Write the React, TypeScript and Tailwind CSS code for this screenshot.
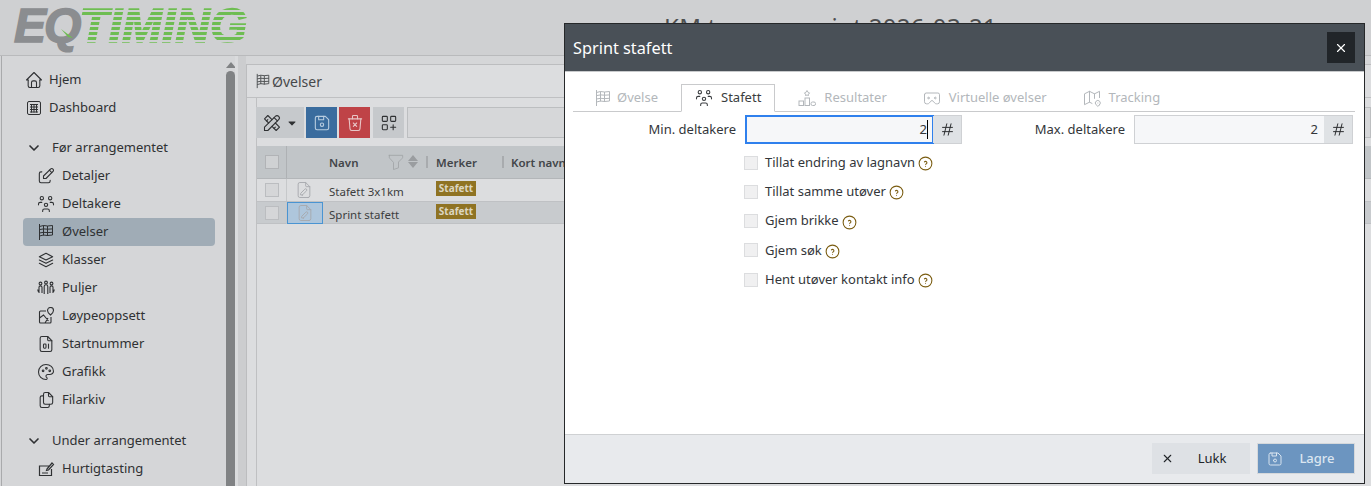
import type { ReactNode } from "react";
import {
  TbCardboards,
  TbCaretDownFilled,
  TbChevronDown,
  TbDeviceFloppy,
  TbEdit,
  TbFileDigit,
  TbFilePencil,
  TbFiles,
  TbFilter,
  TbHash,
  TbHelpCircle,
  TbHome,
  TbLayoutGridAdd,
  TbMap2,
  TbPalette,
  TbStack2,
  TbTools,
  TbTrashX,
  TbUsersGroup,
  TbX,
} from "react-icons/tb";

const font = "font-['Noto_Sans','Open_Sans',sans-serif]";

function FlagIcon({ className = "" }: { className?: string }) {
  return (
    <svg viewBox="0 0 18 18" fill="none" stroke="currentColor" strokeWidth="1" className={className}>
      <path d="M2.5 1v16M2.5 3.5l4-1 4 .5 5-.5v9.5l-5 .5-4-.5-4 1M2.5 6.6l4-.7 4 .3 5-.3M2.5 10l4-.7 4 .3 5-.3M6.5 2.5v10M10.5 3v10" />
    </svg>
  );
}

function GridIcon({ className = "" }: { className?: string }) {
  return (
    <svg viewBox="0 0 18 18" fill="none" stroke="currentColor" strokeWidth="1" className={className}>
      <rect x="2.5" y="2.5" width="13" height="13" rx="1.5" />
      <path d="M5 5.5h8M5 8h8M5 10.5h8M5 13h8M6.5 5v8.5M9 5v8.5M11.5 5v8.5" />
    </svg>
  );
}

function QuickEntryIcon({ className = "" }: { className?: string }) {
  return (
    <svg viewBox="0 0 18 18" fill="none" stroke="currentColor" strokeWidth="1.2" className={className}>
      <path d="M12 6H2.5v9.5h12V9M5 13h6M10 9l5-6 1.5 1.5-5 5.5-2 .5z" />
    </svg>
  );
}

function PodiumIcon({ className = "" }: { className?: string }) {
  return (
    <svg viewBox="0 0 18 18" fill="none" stroke="currentColor" strokeWidth="1" className={className}>
      <path d="M9 1.5l1.2 2 1.3.4-1 1.4v1.2L9 6l-1.5.5V5.3l-1-1.4 1.3-.4z" />
      <rect x="1" y="12" width="4.5" height="4.5" />
      <rect x="7" y="9" width="4.5" height="7.5" />
      <rect x="13" y="13" width="4.5" height="3.5" rx="1.5" />
    </svg>
  );
}

function PoolsIcon({ className = "" }: { className?: string }) {
  return (
    <svg viewBox="0 0 18 18" fill="none" stroke="currentColor" strokeWidth="1.1" className={className}>
      <circle cx="3.5" cy="4.5" r="1.4" />
      <circle cx="9" cy="3.5" r="1.4" />
      <circle cx="14.5" cy="4.5" r="1.4" />
      <path d="M2 14V8.500a1.500 1.500 0 0 1 3-.2v5.700M7.200 15V7.500a1.800 1.800 0 0 1 3.600 0V15M13 14V8.300a1.500 1.500 0 0 1 3 .2V14M1 10.500c-.3 1 .2 2 1 2.500M17 10.500c.3 1-.2 2-1 2.500" />
    </svg>
  );
}

function CourseIcon({ className = "" }: { className?: string }) {
  return (
    <svg viewBox="0 0 18 18" fill="none" stroke="currentColor" strokeWidth="1.1" className={className}>
      <path d="M9 4H3.500a1 1 0 0 0-1 1v10a1 1 0 0 0 1 1h9.500a1 1 0 0 0 1-1v-5M2.500 11l4-3 5 6M8 16l3-5" />
      <path d="M13.500 8s-3-2.500-3-4.500a3 3 0 0 1 6 0C16.500 5.500 13.500 8 13.500 8z" />
    </svg>
  );
}

type NavEntry = { label: string; icon: ReactNode; active?: boolean };

const iconClass = "w-[18px] h-[18px] shrink-0";
const tablerClass = "w-5 h-5 -mx-px shrink-0";

const beforeItems: NavEntry[] = [
  { label: "Detaljer", icon: <TbEdit className={tablerClass} strokeWidth={1.3} /> },
  { label: "Deltakere", icon: <TbUsersGroup className={tablerClass} strokeWidth={1.3} /> },
  { label: "Øvelser", icon: <FlagIcon className={iconClass} />, active: true },
  { label: "Klasser", icon: <TbStack2 className={tablerClass} strokeWidth={1.3} /> },
  { label: "Puljer", icon: <PoolsIcon className={iconClass} /> },
  { label: "Løypeoppsett", icon: <CourseIcon className={iconClass} /> },
  { label: "Startnummer", icon: <TbFileDigit className={tablerClass} strokeWidth={1.3} /> },
  { label: "Grafikk", icon: <TbPalette className={tablerClass} strokeWidth={1.3} /> },
  { label: "Filarkiv", icon: <TbFiles className={tablerClass} strokeWidth={1.3} /> },
];

function NavItem({ label, icon, active }: NavEntry) {
  return (
    <div className={`h-7 flex items-center gap-[7px] pl-[14px] ml-[21px] w-[192px] rounded ${active ? "bg-[#a0acb6]" : ""}`}>
      <span className="w-[18px] flex justify-center">{icon}</span>
      {label}
    </div>
  );
}

function Sidebar() {
  return (
    <aside className="w-[221px] shrink-0 pt-[10px] text-[13px] text-[#2f3133]">
      <div className="h-7 flex items-center gap-[6px] pl-[23px]">
        <TbHome className={tablerClass} strokeWidth={1.3} />
        Hjem
      </div>
      <div className="h-7 flex items-center gap-[6px] pl-[23px]">
        <GridIcon className={iconClass} />
        Dashboard
      </div>
      <div className="h-7 mt-3 flex items-center gap-[10px] pl-[24px]">
        <TbChevronDown className="w-4 h-4" strokeWidth={2.5} />
        Før arrangementet
      </div>
      {beforeItems.map((item) => (
        <NavItem key={item.label} {...item} />
      ))}
      <div className="h-7 mt-[13px] flex items-center gap-[10px] pl-[24px]">
        <TbChevronDown className="w-4 h-4" strokeWidth={2.5} />
        Under arrangementet
      </div>
      <NavItem label="Hurtigtasting" icon={<QuickEntryIcon className={iconClass} />} />
    </aside>
  );
}

function Scrollbar() {
  return (
    <div className="w-[12px] shrink-0 pl-[3px] flex flex-col items-center pt-[6px] gap-[3px]">
      <div className="w-0 h-0 border-x-[5px] border-x-transparent border-b-[6px] border-b-[#808284]" />
      <div className="w-[9px] flex-1 rounded-t-full bg-[#808284]" />
    </div>
  );
}

function Badge() {
  return (
    <span className="inline-flex items-center justify-center w-10 h-[15px] bg-[#8f7323] text-[#dcd6c0] text-[10px] font-bold">
      Stafett
    </span>
  );
}

function Row({ name, selected }: { name: string; selected?: boolean }) {
  return (
    <div
      className={`grid grid-cols-[30px_36px_113px_auto] items-center border-b border-[#bfc1c4] ${
        selected ? "h-[22px] bg-[#c8cbce]" : "h-[23px]"
      }`}
    >
      <span className="flex justify-center h-full items-center border-r border-[#c6c8ca]">
        <span className="w-[14px] h-[14px] border border-[#bbbdc0] bg-[#d5d6d8]" />
      </span>
      <span
        className={`h-full flex items-center pl-[7px] ${
          selected ? "bg-[#aec6dc] border border-[#4a94d2]" : ""
        }`}
      >
        <TbFilePencil className="w-5 h-5 text-[#a6a9ad]" strokeWidth={1.1} />
      </span>
      <span className="pl-[6px] mt-1 text-[11.5px] text-[#3c3e40]">{name}</span>
      <span className="-mt-[3px] flex">
        <Badge />
      </span>
    </div>
  );
}

function BackgroundPanel() {
  return (
    <section className="mt-2 flex-1 border border-[#bcbdbf] border-r-0 border-b-0 bg-[#dcdddf] text-[13px] text-[#46484a]">
      <div className="h-[33px] flex items-center pl-2 gap-px border-b border-[#bfc0c2] text-[14px]">
        <FlagIcon className="w-4 h-4" />
        Øvelser
      </div>
      <div className="ml-[9px] h-[388px] border-l border-[#bfc0c2]">
        <div className="flex gap-[2px] pt-[9px] pb-2 -ml-px">
          <div className="w-12 h-[31px] bg-[#c6c9cc] flex items-center justify-center gap-1 text-[#2f3133]">
            <TbTools className="w-5 h-5" strokeWidth={1.3} />
            <TbCaretDownFilled className="w-3 h-3" />
          </div>
          <div className="w-[31px] h-[31px] bg-[#3a6c9e] flex items-center justify-center text-[#b9cde0]">
            <TbDeviceFloppy className="w-5 h-5" strokeWidth={1.3} />
          </div>
          <div className="w-[31px] h-[31px] bg-[#bf4347] flex items-center justify-center text-[#e8c5c6]">
            <TbTrashX className="w-5 h-5" strokeWidth={1.3} />
          </div>
          <div className="w-[31px] h-[31px] ml-[1px] bg-[#c6c9cc] flex items-center justify-center text-[#2f3133]">
            <TbLayoutGridAdd className="w-5 h-5" strokeWidth={1.3} />
          </div>
          <div className="flex-1 h-[31px] ml-[1px] border border-[#bcbec0] bg-[#d6d7d9]" />
        </div>
        <div className="h-[33px] bg-[#c1c5c8] border-b border-[#b3b6b9] grid grid-cols-[30px_36px_113px_75px_auto] items-center font-semibold text-[#43464a] text-[11.5px]">
          <span className="flex justify-center h-full items-center border-r border-[#aeb1b4]">
            <span className="w-[14px] h-[14px] border border-[#b1b3b6] bg-[#cfd1d3]" />
          </span>
          <span />
          <span className="relative pl-[6px] mt-px">
            Navn
            <TbFilter className="absolute left-[63px] -top-[2px] w-5 h-5 text-[#a0a3a6]" strokeWidth={1} />
            <span className="absolute left-[85px] top-[1px] flex flex-col gap-[1px]">
              <span className="w-0 h-0 border-x-[5px] border-x-transparent border-b-[6px] border-b-[#9a9da0]" />
              <span className="w-0 h-0 border-x-[5px] border-x-transparent border-t-[6px] border-t-[#9a9da0]" />
            </span>
            <span className="absolute right-[8px] top-[2px] h-3 border-l-2 border-[#a8abae]" />
          </span>
          <span className="relative mt-px">
            Merker
            <span className="absolute right-[7px] top-[2px] h-3 border-l-2 border-[#a8abae]" />
          </span>
          <span className="mt-px whitespace-nowrap">Kort navn</span>
        </div>
        <Row name="Stafett 3x1km" />
        <Row name="Sprint stafett" selected />
      </div>
    </section>
  );
}

function TabButton({ label, icon, active }: { label: string; icon: ReactNode; active?: boolean }) {
  return (
    <div
      className={`flex items-center gap-2 ${
        active
          ? "h-[28px] mx-[2px] px-[13px] border border-[#c9cacc] border-b-white bg-white text-[#3a3d40] -mb-px"
          : "h-[27px] px-[15px] text-[#b3b7bb]"
      }`}
    >
      {icon}
      {label}
    </div>
  );
}

function NumberField({ label, value, focused }: { label: string; value: string; focused?: boolean }) {
  return (
    <div className="flex items-center">
      <span className="text-right w-[172px] pr-[9px] text-[#33363a]">{label}</span>
      <div className="flex h-[29px] border border-[#cfd1d4] flex-1">
        <div
          className={`flex-1 bg-[#f6f7f9] flex items-center justify-end ${
            focused ? "border-2 border-[#2f80ed] -m-px pr-[4px]" : "pr-[6px]"
          }`}
        >
          <span>{value}</span>
          {focused && <span className="w-px h-[19px] bg-black" />}
        </div>
        <span className="w-[28px] bg-[#dfe2e5] flex items-center justify-center">
          <TbHash className="w-[17px] h-[17px] text-[#2c2e30]" strokeWidth={1.4} />
        </span>
      </div>
    </div>
  );
}

const options = [
  "Tillat endring av lagnavn",
  "Tillat samme utøver",
  "Gjem brikke",
  "Gjem søk",
  "Hent utøver kontakt info",
];

function Modal() {
  return (
    <div className="absolute left-[564px] top-[23px] w-[801px] h-[461px] border border-[#26282a] bg-white flex flex-col text-[13px] text-[#33363a]">
      <header className="h-[48px] shrink-0 bg-[#495057] border-b border-[#c8cacc] flex items-center justify-between pl-2 pr-[9px] text-white">
        <span className="text-[16.300px] pt-px">Sprint stafett</span>
        <span className="w-7 h-[31px] bg-[#212529] flex items-center justify-center">
          <TbX className="w-[14px] h-[14px]" strokeWidth={2} />
        </span>
      </header>
      <div className="flex-1 px-2">
        <div className="mt-[13px] h-[27px] pl-[3px] flex items-end gap-[6px] border-b border-[#c9cacc] w-[782px]">
          <TabButton label="Øvelse" icon={<FlagIcon className={`${iconClass} translate-x-[3px]`} />} />
          <TabButton active label="Stafett" icon={<TbUsersGroup className={tablerClass} strokeWidth={1.3} />} />
          <TabButton label="Resultater" icon={<PodiumIcon className={iconClass} />} />
          <TabButton label="Virtuelle øvelser" icon={<TbCardboards className={tablerClass} strokeWidth={1.2} />} />
          <TabButton label="Tracking" icon={<TbMap2 className={tablerClass} strokeWidth={1.2} />} />
        </div>
        <div className="mt-[3px] grid grid-cols-[389px_391px] w-[780px]">
          <NumberField label="Min. deltakere" value="2" focused />
          <NumberField label="Max. deltakere" value="2" />
        </div>
        <div className="mt-[4px] pl-[171px]">
          {options.map((option) => (
            <label key={option} className="h-[29.25px] flex items-center">
              <span className="w-[14px] h-[14px] mr-[7px] bg-[#f0f0f1] border border-[#dcdddf]" />
              {option}
              <TbHelpCircle className="ml-[2px] mt-[2px] w-[17px] h-[17px] text-[#7a5c10]" strokeWidth={1.5} />
            </label>
          ))}
        </div>
      </div>
      <footer className="h-[49px] shrink-0 border-t border-[#cfd1d3] bg-[#e8eaed] flex justify-end gap-[7px] pt-2 pr-[9px]">
        <div className="w-[98px] h-[31px] bg-[#dee1e5] flex items-center px-[9px] text-[#212529]">
          <TbX className="w-[13px] h-[13px]" strokeWidth={2} />
          <span className="flex-1 text-center pl-[9px]">Lukk</span>
        </div>
        <div className="w-[98px] h-[31px] bg-[#6c95c0] border border-[#d5d8db] flex items-center px-2 text-[#dbe6f0]">
          <TbDeviceFloppy className="w-[18px] h-[18px]" strokeWidth={1.3} />
          <span className="flex-1 text-center pl-[4px] font-medium">Lagre</span>
        </div>
      </footer>
    </div>
  );
}

function Logo() {
  return (
    <div className="relative w-[240px] flex items-center pl-[14px] font-['Liberation_Sans',sans-serif] font-bold italic text-[48px] leading-none">
      <span className="text-[#8b8d90] tracking-[-2px] [-webkit-text-stroke:1.5px_#8b8d90]">EQ</span>
      <span className="bg-[repeating-linear-gradient(180deg,#6ebd52_0,#6ebd52_3.500px,#cfd0d2_3.500px,#cfd0d2_5px)] bg-clip-text text-transparent tracking-[0px] [-webkit-text-stroke:1.5px_transparent]">
        TIMING
      </span>
      <svg viewBox="0 0 20 14" className="absolute left-[60px] top-[26px] w-5 h-[14px]">
        <path d="M1 1l12 9-5-1z" fill="#6ebd52" />
      </svg>
    </div>
  );
}

export default function App() {
  return (
    <div className={`relative w-[1371px] h-[486px] overflow-hidden bg-[#d5d6d8] ${font}`}>
      <header className="h-[56px] bg-[#cfd0d2] border-b border-[#b9babc] flex items-start overflow-hidden">
        <div className="pt-[2px]">
          <Logo />
        </div>
        <div className="ml-[424px] pt-[9px] text-[24px] tracking-[0.3px] text-[#4e4f50] whitespace-nowrap">
          KM terrengsprint 2026-03-21
        </div>
      </header>
      <div className="flex h-[430px] pl-px">
        <div className="border-l border-[#a9aaac]" />
        <Sidebar />
        <Scrollbar />
        <div className="w-[3px] bg-[#dadbdd]" />
        <div className="w-[8px] bg-[#cccdcf]" />
        <BackgroundPanel />
      </div>
      <Modal />
    </div>
  );
}
